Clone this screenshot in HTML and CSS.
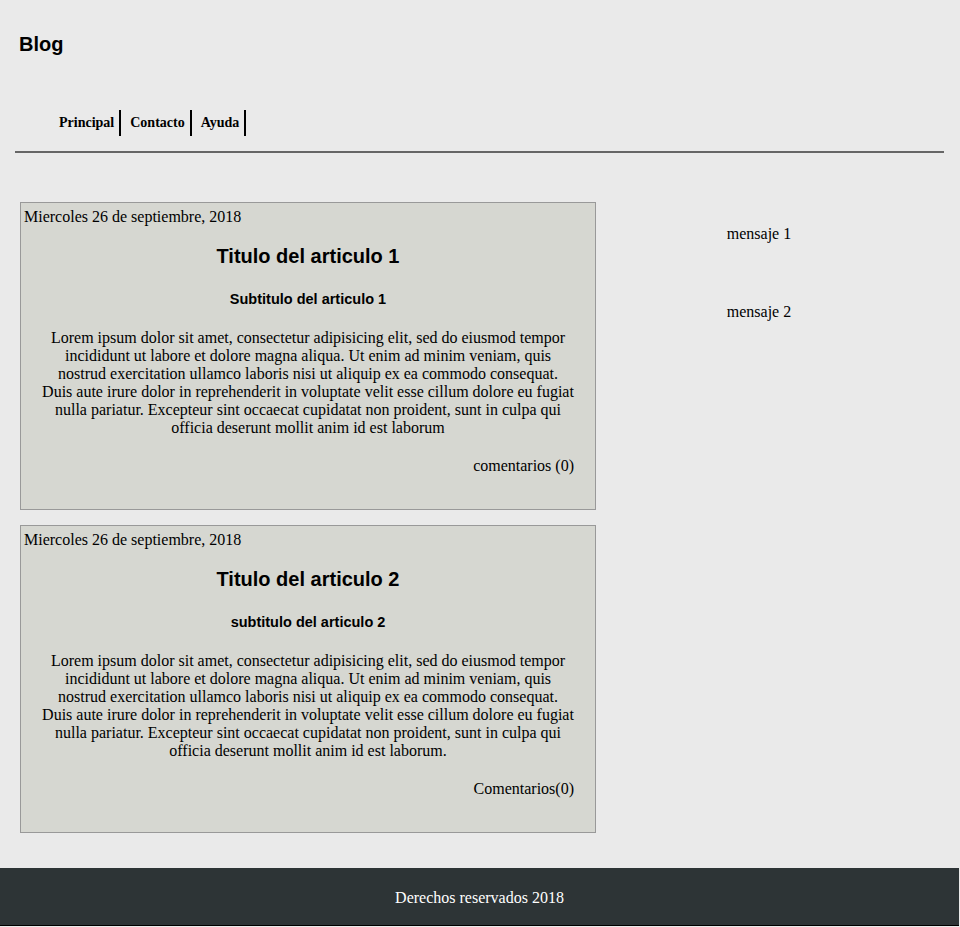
FILE: index.html
```html
<!DOCTYPE html>
<html lang="es">
<head>
<meta charset="utf-8">
<title>Blog</title>
<link rel="stylesheet" href="styles.css">
</head>
<body>
<header class="header">
  <h1 class="logo">Blog</h1>
  <nav class="nav">
    <a class="nav-link" href="#">Principal</a>
    <a class="nav-link" href="#">Contacto</a>
    <a class="nav-link" href="#">Ayuda</a>
  </nav>
</header>
<hr class="divider">
<div class="layout">
  <main class="posts">
    <article class="post">
      <p class="post-date">Miercoles 26 de septiembre, 2018</p>
      <h2 class="post-title">Titulo del articulo 1</h2>
      <h5 class="post-subtitle">Subtitulo del articulo 1</h5>
      <p class="post-body">Lorem ipsum dolor sit amet, consectetur adipisicing elit, sed do eiusmod tempor incididunt ut labore et dolore magna aliqua. Ut enim ad minim veniam, quis nostrud exercitation ullamco laboris nisi ut aliquip ex ea commodo consequat. Duis aute irure dolor in reprehenderit in voluptate velit esse cillum dolore eu fugiat nulla pariatur. Excepteur sint occaecat cupidatat non proident, sunt in culpa qui officia deserunt mollit anim id est laborum</p>
      <p class="post-comments">comentarios (0)</p>
    </article>
    <article class="post">
      <p class="post-date">Miercoles 26 de septiembre, 2018</p>
      <h2 class="post-title">Titulo del articulo 2</h2>
      <h5 class="post-subtitle">subtitulo del articulo 2</h5>
      <p class="post-body">Lorem ipsum dolor sit amet, consectetur adipisicing elit, sed do eiusmod tempor incididunt ut labore et dolore magna aliqua. Ut enim ad minim veniam, quis nostrud exercitation ullamco laboris nisi ut aliquip ex ea commodo consequat. Duis aute irure dolor in reprehenderit in voluptate velit esse cillum dolore eu fugiat nulla pariatur. Excepteur sint occaecat cupidatat non proident, sunt in culpa qui officia deserunt mollit anim id est laborum.</p>
      <p class="post-comments">Comentarios(0)</p>
    </article>
  </main>
  <aside class="sidebar">
    <p class="message">mensaje 1</p>
    <p class="message">mensaje 2</p>
  </aside>
</div>
<footer class="footer">
  <p class="footer-text">Derechos reservados 2018</p>
</footer>
</body>
</html>
```
FILE: styles.css
```css
html, body {
  margin: 0;
  padding: 0;
}
body {
  background: #eaeaea;
  font-family: "Liberation Serif", "Times New Roman", serif;
  font-size: 16px;
  color: #000;
}
.header {
  padding: 33px 0 0 19px;
}
.logo {
  margin: 0;
  font-family: "Liberation Sans", Arial, sans-serif;
  font-size: 20px;
  line-height: 23px;
  font-weight: bold;
}
.nav {
  display: flex;
  margin: 54px 0 0 31px;
}
.nav-link {
  color: #000;
  text-decoration: none;
  font-weight: bold;
  font-size: 14px;
  line-height: 17px;
  padding: 4px 5px 5px 9px;
  border-right: 2px solid #000;
}
.divider {
  margin: 15px 16px 0 15px;
  border: 0;
  border-top: 2px solid #666;
  height: 0;
}
.layout {
  display: flex;
  margin-top: 49px;
}
.posts {
  width: 576px;
  margin-left: 20px;
  display: flex;
  flex-direction: column;
  gap: 15px;
}
.post {
  background: #d6d7d1;
  border: 1px solid #999;
  padding: 5px 3px 34px 3px;
  height: 308px;
  box-sizing: border-box;
}
.post-date {
  margin: 0;
  line-height: 18px;
}
.post-title {
  margin: 19px 0 0;
  text-align: center;
  font-family: "Liberation Sans", Arial, sans-serif;
  font-size: 20px;
  line-height: 23px;
}
.post-subtitle {
  margin: 24px 0 0;
  text-align: center;
  font-family: "Liberation Sans", Arial, sans-serif;
  font-size: 14.5px;
  line-height: 15px;
}
.post-body {
  margin: 22px 17px 0;
  text-align: center;
  line-height: 18px;
}
.post-comments {
  margin: 20px 18px 0 0;
  text-align: right;
  line-height: 18px;
}
.sidebar {
  flex: 1;
  padding-right: 38px;
  padding-top: 23px;
  text-align: center;
}
.message {
  margin: 0 0 60px;
  line-height: 18px;
}
.footer {
  margin-top: 35px;
  margin-right: 1px;
  background: #2d3436;
  border-bottom: 1px solid #000;
  height: 58px;
  padding-top: 2px;
  box-sizing: border-box;
  display: flex;
  align-items: center;
  justify-content: center;
}
.footer-text {
  margin: 0;
  color: #fff;
  line-height: 18px;
}
```
